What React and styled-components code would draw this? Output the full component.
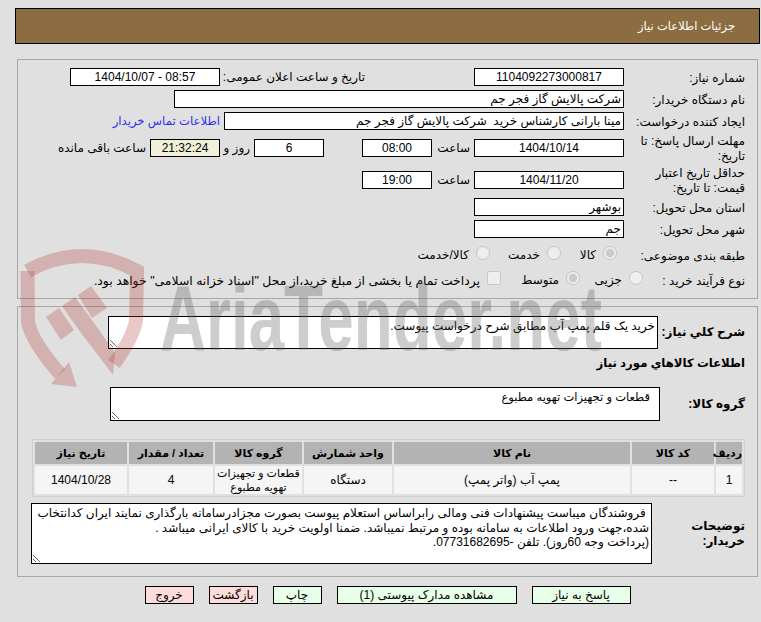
import React from "react";
import styled, { createGlobalStyle } from "styled-components";

const Global = createGlobalStyle`
  html, body {
    margin: 0;
    padding: 0;
    background: #e0e0e0;
  }
  body {
    font-family: "Liberation Sans", "DejaVu Sans", sans-serif;
    font-size: 12px;
    color: #000;
  }
`;

const items = [
  { id: 1, code: "--", name: "پمپ آب (واتر پمپ)", unit: "دستگاه", group: "قطعات و تجهیزات تهویه مطبوع", qty: "4", date: "1404/10/28" },
];

const description = ` فروشندگان میباست پیشنهادات فنی ومالی رابراساس استعلام پیوست بصورت مجزادرسامانه بارگذاری نمایند ایران کدانتخاب
شده،جهت ورود اطلاعات به سامانه بوده و مرتبط نمیباشد. ضمنا اولویت خرید با کالای ایرانی میباشد .
(پرداخت وجه 60روز). تلفن -07731682695.`;

const Watermark = () => (
  <Mark viewBox="0 0 761 622" width="761" height="622" aria-hidden="true">
    <g fill="none" stroke="rgba(180,50,50,.27)" strokeWidth="14">
      <path d="M27.5 271 Q82 241 137 271 L136 320 Q134 336 114 364" />
      <path d="M27.5 271 L28 322 Q32 342 60 374" />
    </g>
    <g fill="rgba(180,50,50,.27)">
      <path d="M69 362 L77 387 L51 384 Z" />
      <path d="M62 306 L75 297 L92 320 L115 353 L113 375 L78 329 Z" />
      <path d="M78 295 L91 286 L107 308 L92 318 Z" />
      <path d="M46 317 L59 308 L74 330 L61 340 Z" />
    </g>
    <MarkText x="160" y="350" textLength="442" lengthAdjust="spacingAndGlyphs">AriaTender.net</MarkText>
  </Mark>
);

const App = () => {
  return (
    <Page dir="rtl">
      <Global />
      <Header>جزئیات اطلاعات نیاز</Header>

      <Panel $top={15} $pt={6} $pb={8}>
        <Row $h={22}>
          <Label>شماره نیاز:</Label>
          <Field $w={150} $center readOnly value="1104092273000817" />
          <Inline $w={149} $mr={105}>تاریخ و ساعت اعلان عمومی:</Inline>
          <Field $w={150} $center readOnly value="08:57 - 1404/10/07" />
        </Row>
        <Row $h={22}>
          <Label>نام دستگاه خریدار:</Label>
          <Field $w={450} readOnly value="شرکت پالایش گاز فجر جم" />
        </Row>
        <Row $h={22}>
          <Label>ایجاد کننده درخواست:</Label>
          <Field $w={400} readOnly value="مینا بارانی کارشناس خرید  شرکت پالایش گاز فجر جم" />
          <Contact href="#">اطلاعات تماس خریدار</Contact>
        </Row>
        <Row $h={32}>
          <Label>مهلت ارسال پاسخ: تا تاریخ:</Label>
          <Field $w={150} $center readOnly value="1404/10/14" />
          <Inline $w={42}>ساعت</Inline>
          <Field $w={70} $center readOnly value="08:00" />
          <Field $w={70} $center $mr={38} readOnly value="6" />
          <Inline $w={34}>روز و</Inline>
          <Field $w={70} $center $bg="#f0f0d8" readOnly value="21:32:24" />
          <Inline>ساعت باقی مانده</Inline>
        </Row>
        <Row $h={32}>
          <Label>حداقل تاریخ اعتبار قیمت: تا تاریخ:</Label>
          <Field $w={150} $center readOnly value="1404/11/20" />
          <Inline $w={42}>ساعت</Inline>
          <Field $w={70} $center readOnly value="19:00" />
        </Row>
        <Row $h={22}>
          <Label>استان محل تحویل:</Label>
          <Field $w={150} readOnly value="بوشهر" />
        </Row>
        <Row $h={22}>
          <Label>شهر محل تحویل:</Label>
          <Field $w={150} readOnly value="جم" />
        </Row>
        <Row $h={30}>
          <Label>طبقه بندی موضوعی:</Label>
          <Option $w={56} $mr={7}>
            <Check type="radio" name="cat" disabled defaultChecked />
            <span>کالا</span>
          </Option>
          <Option $w={71}>
            <Check type="radio" name="cat" disabled />
            <span>خدمت</span>
          </Option>
          <Option>
            <Check type="radio" name="cat" disabled />
            <span>کالا/خدمت</span>
          </Option>
        </Row>
        <Row $h={20}>
          <Label $w={90}>نوع فرآیند خرید :</Label>
          <Option $w={63}>
            <Check type="radio" name="kind" disabled />
            <span>جزیی</span>
          </Option>
          <Option $w={79}>
            <Check type="radio" name="kind" disabled defaultChecked />
            <span>متوسط</span>
          </Option>
          <Option>
            <Check type="checkbox" disabled />
            <WideText>پرداخت تمام یا بخشی از مبلغ خرید،از محل "اسناد خزانه اسلامی" خواهد بود.</WideText>
          </Option>
        </Row>
      </Panel>

      <Panel $top={7} $pt={9} $pb={12}>
        <Block>
          <BoldLabel $w={87}>شرح کلي نیاز:</BoldLabel>
          <Area $w={550} $h={33} readOnly defaultValue="خرید یک قلم پمپ آب مطابق شرح درخواست پیوست." />
        </Block>
        <SectionTitle>اطلاعات کالاهاي مورد نیاز</SectionTitle>
        <Block $top={16}>
          <BoldLabel $w={85}>گروه کالا:</BoldLabel>
          <Area $w={550} $h={34} $pad={9} $size={11.5} readOnly defaultValue="قطعات و تجهیزات تهویه مطبوع" />
        </Block>

        <ItemsTable>
          <colgroup>
            <col style={{ width: 26 }} />
            <col style={{ width: 82 }} />
            <col style={{ width: 236 }} />
            <col style={{ width: 88 }} />
            <col style={{ width: 87 }} />
            <col style={{ width: 84 }} />
            <col style={{ width: 92 }} />
          </colgroup>
          <thead>
            <tr>
              <Th>ردیف</Th>
              <Th>کد کالا</Th>
              <Th>نام کالا</Th>
              <Th>واحد شمارش</Th>
              <Th>گروه کالا</Th>
              <Th>تعداد / مقدار</Th>
              <Th>تاریخ نیاز</Th>
            </tr>
          </thead>
          <tbody>
            {items.map((item) => (
              <tr key={item.id}>
                <Td>{item.id}</Td>
                <Td>{item.code}</Td>
                <Td>{item.name}</Td>
                <Td>{item.unit}</Td>
                <Td $size={11}>{item.group}</Td>
                <Td>{item.qty}</Td>
                <Td>{item.date}</Td>
              </tr>
            ))}
          </tbody>
        </ItemsTable>

        <Block $top={6}>
          <BoldLabel $w={93}>توضیحات خریدار:</BoldLabel>
          <Area $w={621} $h={61} wrap="off" readOnly defaultValue={description} />
        </Block>
      </Panel>

      <Footer>
        <Button $w={99}>پاسخ به نیاز</Button>
        <Button $w={180}>مشاهده مدارک پیوستی (1)</Button>
        <Button $w={49}>چاپ</Button>
        <Button $w={49} $danger>بازگشت</Button>
        <Button $w={49} $danger>خروج</Button>
      </Footer>

      <Watermark />
    </Page>
  );
};

const Page = styled.div`
  position: relative;
  box-sizing: border-box;
  width: 761px;
  height: 622px;
  padding: 8px 1px 0 15px;
  overflow: hidden;
  background: #e0e0e0;
`;

const Mark = styled.svg`
  position: absolute;
  top: 0;
  left: 0;
  pointer-events: none;
`;

const MarkText = styled.text`
  font-family: "Liberation Sans", sans-serif;
  font-weight: bold;
  font-size: 92px;
  fill: rgba(90, 90, 90, 0.3);
  direction: ltr;
`;

const Header = styled.div`
  box-sizing: border-box;
  height: 36px;
  padding-right: 24px;
  display: flex;
  align-items: center;
  background: #8c6d42;
  border: 1px solid #000;
  color: #fff;
  font-size: 11.5px;
`;

const Panel = styled.div`
  margin: ${(p) => p.$top}px 2px 0 2px;
  padding: ${(p) => p.$pt}px 12px ${(p) => p.$pb}px 0;
  border: 1px solid #a8a8a8;
`;

const Row = styled.div`
  display: flex;
  align-items: center;
  height: ${(p) => p.$h}px;
`;

const Label = styled.div`
  flex: none;
  box-sizing: border-box;
  width: ${(p) => p.$w || 109}px;
  margin-left: 12px;
  padding-top: 2px;
  line-height: 15px;
`;

const Inline = styled.div`
  flex: none;
  box-sizing: border-box;
  width: ${(p) => (p.$w ? `${p.$w}px` : "auto")};
  margin-right: ${(p) => p.$mr || 0}px;
  padding-right: 4px;
  white-space: nowrap;
`;

const Field = styled.input`
  flex: none;
  box-sizing: border-box;
  width: ${(p) => p.$w}px;
  height: 18px;
  margin: 0 ${(p) => p.$mr || 0}px 0 0;
  padding: 0 2px;
  border: 1px solid #000;
  border-radius: 0;
  outline: none;
  background: ${(p) => p.$bg || "#fff"};
  color: #000;
  font: 12px "Liberation Sans", "DejaVu Sans", sans-serif;
  text-align: ${(p) => (p.$center ? "center" : "right")};
`;

const Contact = styled.a`
  margin-right: 4px;
  color: #3030f0;
  font-size: 11.7px;
  text-decoration: none;
  white-space: nowrap;
`;

const Option = styled.label`
  flex: none;
  display: flex;
  align-items: center;
  gap: 7px;
  width: ${(p) => (p.$w ? `${p.$w}px` : "auto")};
  margin-right: ${(p) => p.$mr || 0}px;
  white-space: nowrap;
`;

const WideText = styled.span`
  font-size: 12.4px;
`;

const Check = styled.input`
  flex: none;
  width: 14px;
  height: 14px;
  margin: -4px 0 0 0;
`;

const Block = styled.div`
  display: flex;
  align-items: center;
  margin-top: ${(p) => p.$top || 0}px;
`;

const BoldLabel = styled.div`
  flex: none;
  width: ${(p) => p.$w}px;
  font-weight: bold;
  line-height: 15px;
`;

const SectionTitle = styled.div`
  margin-top: 6px;
  height: 16px;
  line-height: 16px;
  font-size: 11.7px;
  font-weight: bold;
`;

const Area = styled.textarea`
  flex: none;
  box-sizing: border-box;
  display: block;
  width: ${(p) => p.$w}px;
  height: ${(p) => p.$h}px;
  margin: 0;
  padding: 2px ${(p) => p.$pad || 2}px 0 2px;
  border: 1px solid #000;
  border-radius: 0;
  outline: none;
  background: #fff;
  color: #000;
  font: ${(p) => p.$size || 12}px/14.5px "Liberation Sans", "DejaVu Sans", sans-serif;
  overflow: hidden;
`;

const ItemsTable = styled.table`
  box-sizing: border-box;
  table-layout: fixed;
  width: 712px;
  margin-top: 18px;
  border: 1px solid #cfcfcf;
  border-spacing: 2px;
`;

const Th = styled.th`
  height: 22px;
  padding: 0;
  background: #b3b3b3;
  font-size: 11px;
  font-weight: bold;
  text-align: center;
  white-space: nowrap;
`;

const Td = styled.td`
  height: 28px;
  padding: 0;
  background: #f5f5f5;
  font-size: ${(p) => p.$size || 12}px;
  line-height: 14px;
  text-align: center;
`;

const Footer = styled.div`
  display: flex;
  justify-content: center;
  gap: 15px;
  margin-top: 9px;
`;

const Button = styled.button`
  box-sizing: border-box;
  width: ${(p) => p.$w}px;
  height: 18px;
  padding: 0;
  border: 1px solid #000;
  border-radius: 0;
  background: ${(p) => (p.$danger ? "#ffdcdc" : "#e8ffe8")};
  color: #000;
  font: 12px "Liberation Sans", "DejaVu Sans", sans-serif;
`;

export default App;
